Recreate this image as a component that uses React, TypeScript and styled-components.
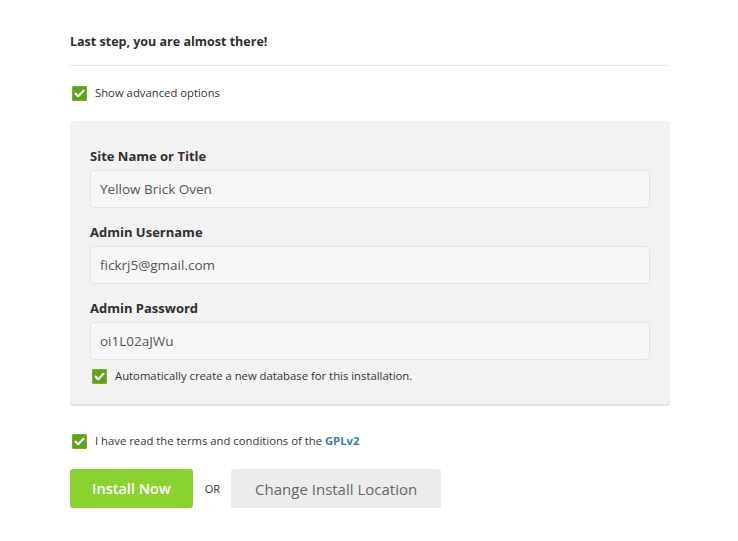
import React from "react";
import styled, { createGlobalStyle } from "styled-components";

const GlobalStyle = createGlobalStyle`
  html, body {
    margin: 0;
    padding: 0;
    background: #ffffff;
  }
  body {
    font-family: "Open Sans", "Liberation Sans", sans-serif;
    color: #333333;
  }
`;

const Page = styled.div`
  width: 600px;
  padding: 33px 0 0 70px;
`;

const Heading = styled.h2`
  margin: 0;
  font-size: 12.5px;
  font-weight: 700;
  color: #2f2f2f;
  line-height: 18px;
  padding-bottom: 14px;
  border-bottom: 1px solid #e9e9e9;
`;

const CheckRow = styled.label<{ $indent?: number; $top?: number }>`
  display: flex;
  align-items: center;
  gap: 8px;
  margin-top: ${(p) => p.$top ?? 0}px;
  padding-left: ${(p) => p.$indent ?? 2}px;
  font-size: 11.3px;
  color: #333333;
  line-height: 16px;
`;

const Box = styled.span`
  width: 15px;
  height: 15px;
  border-radius: 2px;
  background: #56a818;
  box-shadow: inset 0 0 0 1px #86a82c;
  display: flex;
  align-items: center;
  justify-content: center;
  flex-shrink: 0;
`;

const Link = styled.a`
  color: #3d7bb3;
  font-weight: 700;
  text-decoration: none;
`;

const Panel = styled.div`
  margin-top: 20px;
  background: #f2f2f2;
  border-radius: 4px;
  box-shadow: 0 2px 0 #e2e2e2;
  padding: 27px 20px 20px 20px;
`;

const Field = styled.div`
  display: flex;
  flex-direction: column;
  gap: 5px;
  margin-bottom: 16px;
`;

const Label = styled.div`
  font-size: 13px;
  font-weight: 700;
  color: #2f2f2f;
  line-height: 17px;
`;

const Input = styled.div`
  height: 36px;
  border: 1px solid #e4e4e4;
  border-radius: 4px;
  background: #f7f7f7;
  display: flex;
  align-items: center;
  padding: 0 9px;
  font-size: 13.5px;
  color: #555555;
`;

const Actions = styled.div`
  display: flex;
  align-items: center;
  margin-top: 20px;
`;

const Button = styled.button<{ $primary?: boolean }>`
  height: 39px;
  border: none;
  border-radius: 3px;
  font-family: inherit;
  font-size: ${(p) => (p.$primary ? 14.5 : 15)}px;
  padding: 0 ${(p) => (p.$primary ? 22 : 24)}px;
  background: ${(p) => (p.$primary ? "#8ad22f" : "#ececec")};
  color: ${(p) => (p.$primary ? "#ffffff" : "#666666")};
  font-weight: ${(p) => (p.$primary ? 600 : 400)};
  box-shadow: ${(p) => (p.$primary ? "none" : "0 1px 0 #dcdcdc")};
`;

const Or = styled.span`
  font-size: 11px;
  color: #333333;
  margin: 0 11px 0 12px;
`;

const Check = () => (
  <Box>
    <svg width="11" height="9" viewBox="0 0 11 9">
      <path d="M1.5 4.6 L4.2 7.2 L9.5 1.8" fill="none" stroke="#ffffff" strokeWidth="2.2" strokeLinecap="round" strokeLinejoin="round" />
    </svg>
  </Box>
);

const fields = [
  { label: "Site Name or Title", value: "Yellow Brick Oven" },
  { label: "Admin Username", value: "fickrj5@gmail.com" },
  { label: "Admin Password", value: "oi1L02aJWu" },
];

export default function App() {
  return (
    <>
      <GlobalStyle />
      <Page>
        <Heading>Last step, you are almost there!</Heading>
        <CheckRow $top={19}>
          <Check />
          Show advanced options
        </CheckRow>
        <Panel>
          {fields.map((f) => (
            <Field key={f.label}>
              <Label>{f.label}</Label>
              <Input>{f.value}</Input>
            </Field>
          ))}
          <CheckRow $indent={2} $top={-8}>
            <Check />
            Automatically create a new database for this installation.
          </CheckRow>
        </Panel>
        <CheckRow $top={29}>
          <Check />
          <span>
            I have read the terms and conditions of the <Link>GPLv2</Link>
          </span>
        </CheckRow>
        <Actions>
          <Button $primary>Install Now</Button>
          <Or>OR</Or>
          <Button>Change Install Location</Button>
        </Actions>
      </Page>
    </>
  );
}
